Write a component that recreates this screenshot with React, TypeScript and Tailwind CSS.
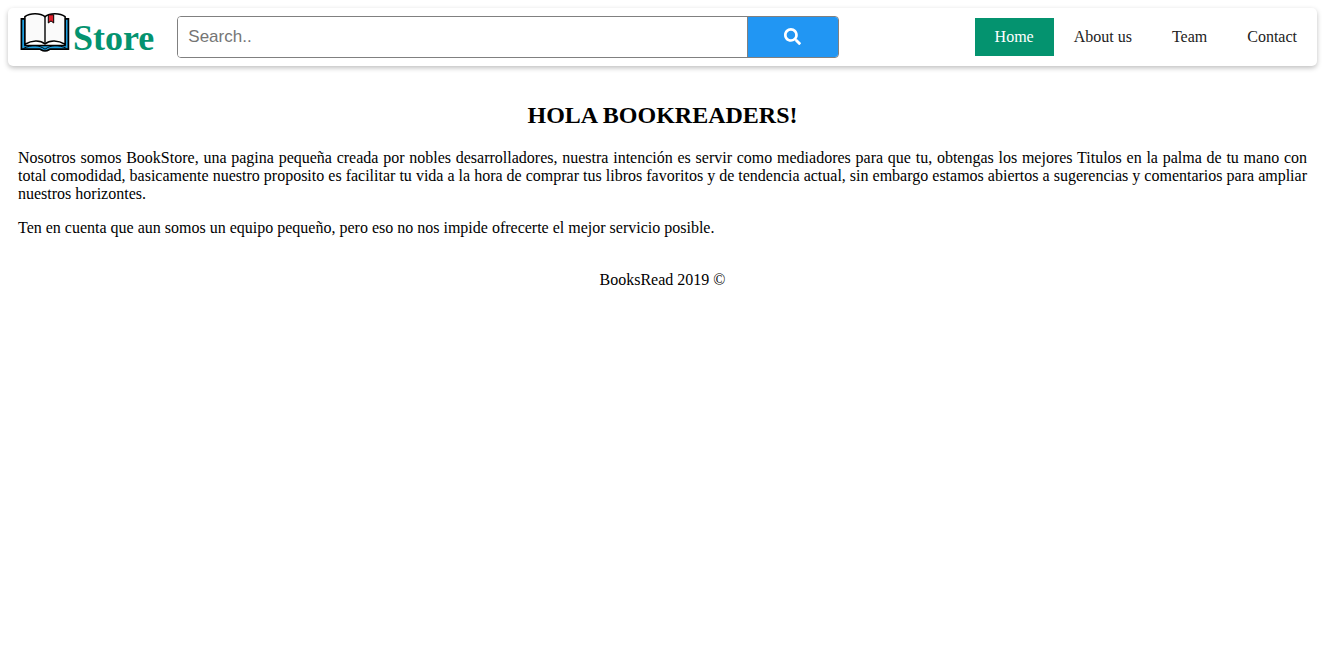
import { FaSearch } from 'react-icons/fa';

const links = [
  { label: 'Home', href: '#home', active: true },
  { label: 'About us', href: '#about', active: false },
  { label: 'Team', href: '#team', active: false },
  { label: 'Contact', href: '#contact', active: false },
];

function BookLogo() {
  return (
    <svg className="h-[42px] w-[50px] shrink-0" viewBox="0 0 50 42" aria-hidden="true">
      <path
        d="M1.4 6.9H5V33.5H45V6.9H48.4V37.2H30.2C29 37.2 28.4 39 25 39S21 37.2 19.8 37.2H1.4Z"
        fill="#1e9fe0"
        stroke="#000"
        strokeWidth="1.7"
      />
      <path
        d="M3.5 36.4C12 32.4 19 32.8 25 37.2C31 32.8 38 32.4 46.5 36.4"
        fill="none"
        stroke="#000"
        strokeWidth="1"
      />
      <path
        d="M4.9 4.6C10 .9 20 .7 25 4.6C30 .7 40 .9 45.1 4.6V32.2C38 28.2 30 27.6 25 32C20 27.6 12 28.2 4.9 32.2Z"
        fill="#fafafa"
        stroke="#000"
        strokeWidth="1.6"
        strokeLinejoin="round"
      />
      <path d="M25 4.6V32" stroke="#000" strokeWidth="1.4" />
      <path d="M28.3 2.8V11L31 8.9L33.7 11V2.8Z" fill="#e01f2b" stroke="#000" strokeWidth="1" />
    </svg>
  );
}

export default function App() {
  return (
    <div className="p-2 font-['Liberation_Serif',serif] text-base leading-[18px] text-black">
      <header className="flex items-center rounded-[5px] bg-white pl-3 shadow-[0_2px_5px_rgba(0,0,0,0.25)]">
        <a href="#home" className="flex h-[58px] items-start pt-1 text-[#04936f]" aria-label="Store">
          <BookLogo />
          <span className="pt-1.5 pl-[3px] text-4xl leading-10 font-bold">Store</span>
        </a>
        <form
          role="search"
          className="ml-[23px] flex h-[42px] w-[51%] overflow-hidden rounded-[4px] border border-[#808080]"
          onSubmit={(event) => event.preventDefault()}
        >
          <input
            type="text"
            aria-label="Search"
            placeholder="Search.."
            className="min-w-0 flex-1 bg-white px-2.5 font-['Liberation_Sans',sans-serif] text-[17px] text-black outline-none placeholder:text-[#757575]"
          />
          <button
            type="submit"
            aria-label="Submit search"
            className="flex w-[91px] items-center justify-center border-l border-[#808080] bg-[#2196f3] pb-0.5 text-[17px] text-white"
          >
            <FaSearch />
          </button>
        </form>
        <nav className="ml-auto flex">
          {links.map((link) => (
            <a
              key={link.label}
              href={link.href}
              className={
                link.active
                  ? 'bg-[#04936f] px-5 py-2.5 whitespace-nowrap text-white'
                  : 'px-5 py-2.5 whitespace-nowrap text-[#222]'
              }
            >
              {link.label}
            </a>
          ))}
        </nav>
      </header>
      <main className="px-2.5 pt-9">
        <h1 className="text-center text-2xl leading-[27px] font-bold">HOLA BOOKREADERS!</h1>
        <p className="mt-5 text-justify">
          Nosotros somos BookStore, una pagina pequeña creada por nobles desarrolladores, nuestra
          intención es servir como mediadores para que tu, obtengas los mejores Titulos en la palma de
          tu mano con total comodidad, basicamente nuestro proposito es facilitar tu vida a la hora de
          comprar tus libros favoritos y de tendencia actual, sin embargo estamos abiertos a
          sugerencias y comentarios para ampliar nuestros horizontes.
        </p>
        <p className="mt-4 text-justify">
          Ten en cuenta que aun somos un equipo pequeño, pero eso no nos impide ofrecerte el mejor
          servicio posible.
        </p>
      </main>
      <footer className="mt-[34px] text-center">BooksRead 2019 ©</footer>
    </div>
  );
}
